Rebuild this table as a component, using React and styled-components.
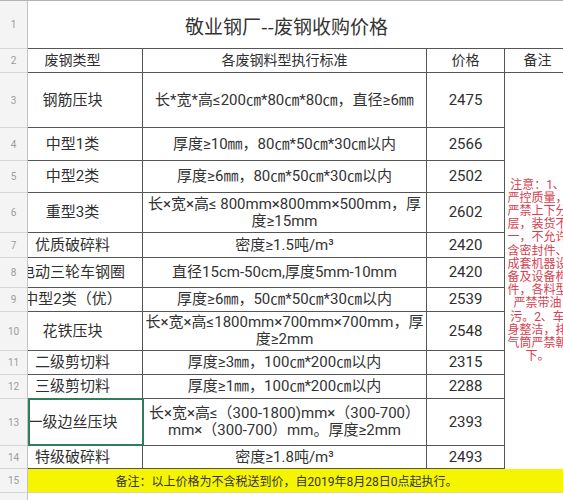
import React from "react";
import styled, { createGlobalStyle } from "styled-components";

const GlobalStyle = createGlobalStyle`
  html, body {
    margin: 0;
    padding: 0;
    background: #ffffff;
    overflow: hidden;
  }
  body {
    width: 563px;
    height: 500px;
    font-family: "Roboto", "Noto Sans CJK SC", sans-serif;
  }
`;

const ROW_HEIGHTS = [48, 24, 55, 33, 32, 40, 25, 30, 24, 39, 24, 24, 47, 23, 24, 40];

const rows = [
  { type: "钢筋压块", spec: ["长*宽*高≤200㎝*80㎝*80㎝，直径≥6㎜"], price: "2475" },
  { type: "中型1类", spec: ["厚度≥10㎜，80㎝*50㎝*30㎝以内"], price: "2566" },
  { type: "中型2类", spec: ["厚度≥6㎜，80㎝*50㎝*30㎝以内"], price: "2502" },
  { type: "重型3类", spec: ["长×宽×高≤ 800mm×800mm×500mm，厚", "度≥15mm"], price: "2602" },
  { type: "优质破碎料", spec: ["密度≥1.5吨/m³"], price: "2420" },
  { type: "电动三轮车钢圈", spec: ["直径15cm-50cm,厚度5mm-10mm"], price: "2420" },
  { type: "中型2类（优）", spec: ["厚度≥6㎜，50㎝*50㎝*30㎝以内"], price: "2539" },
  { type: "花铁压块", spec: ["长×宽×高≤1800mm×700mm×700mm，厚", "度≥2mm"], price: "2548" },
  { type: "二级剪切料", spec: ["厚度≥3㎜，100㎝*200㎝以内"], price: "2315" },
  { type: "三级剪切料", spec: ["厚度≥1㎜，100㎝*200㎝以内"], price: "2288" },
  { type: "一级边丝压块", spec: ["长×宽×高≤（300-1800)mm×（300-700）", "mm×（300-700）mm。厚度≥2mm"], price: "2393", selected: true },
  { type: "特级破碎料", spec: ["密度≥1.8吨/m³"], price: "2493" },
];

const notes = [
  "注意：1、",
  "严控质量，",
  "严禁上下分",
  "层，装货不",
  "一，不允许",
  "含密封件、",
  "成套机器设",
  "备及设备构",
  "件，各料型",
  "严禁带油",
  "污。2、车",
  "身整洁，排",
  "气筒严禁朝",
  "下。",
];

const Page = styled.div`
  display: flex;
  width: 563px;
  height: 500px;
  overflow: hidden;
  border-top: 1px solid #b4b4b4;
  box-sizing: border-box;
`;

const RowHeaders = styled.div`
  width: 28px;
  flex: none;
  display: flex;
  flex-direction: column;
  background: #f4f4f4;
  border-right: 1px solid #c4c4c4;
  box-sizing: border-box;
`;

const RowNum = styled.div`
  flex: none;
  box-sizing: border-box;
  border-bottom: 1px solid #d6d6d6;
  display: flex;
  align-items: center;
  justify-content: center;
  font-size: 10px;
  color: #9c9c9c;
`;

const Viewport = styled.div`
  flex: 1;
  overflow: hidden;
`;

const Sheet = styled.div`
  margin-left: -25px;
  display: grid;
  grid-template-columns: 140px 284px 78px 65px;
  grid-template-rows: ${ROW_HEIGHTS.map((h) => h + "px").join(" ")};
  color: #2f2f2f;
`;

const Cell = styled.div`
  position: relative;
  box-sizing: border-box;
  display: flex;
  align-items: center;
  justify-content: center;
  text-align: center;
  white-space: nowrap;
  border-right: 1px solid #555;
  border-bottom: 1px solid #555;
  font-size: ${(p) => p.$size || 15}px;
  line-height: 17px;
`;

const TitleCell = styled.div`
  grid-column: 1 / -1;
  display: flex;
  align-items: center;
  justify-content: center;
  box-sizing: border-box;
  border-bottom: 1px solid #555;
  font-family: "Noto Sans CJK SC", sans-serif;
  font-size: 19px;
  color: #333;
  padding-top: 2px;
`;

const SpecText = styled.div`
  display: flex;
  flex-direction: column;
  align-items: center;
  font-size: 15px;
  line-height: 17px;
  color: #333;
`;

const NotesCell = styled.div`
  grid-column: 4;
  grid-row: 3 / 15;
  display: flex;
  flex-direction: column;
  align-items: center;
  justify-content: center;
  white-space: nowrap;
  font-size: 12px;
  line-height: 13.2px;
  color: #d7404f;
`;

const FooterCell = styled.div`
  grid-column: 1 / -1;
  box-sizing: border-box;
  background: #f6f500;
  border-bottom: 1px solid #d8d8a0;
  display: flex;
  align-items: center;
  justify-content: center;
  font-size: 12px;
  color: #333;
`;

const EmptyRow = styled.div`
  grid-column: 1 / -1;
`;

const Selection = styled.div`
  position: absolute;
  left: 25px;
  right: -2px;
  top: -1px;
  bottom: -1px;
  border: 2px solid #2f7d5c;
  pointer-events: none;
`;

export default function App() {
  return (
    <>
      <GlobalStyle />
      <Page>
        <RowHeaders>
          {ROW_HEIGHTS.map((h, i) => (
            <RowNum key={i} style={{ height: h }}>
              {i < 15 ? i + 1 : ""}
            </RowNum>
          ))}
        </RowHeaders>
        <Viewport>
          <Sheet>
            <TitleCell>敬业钢厂--废钢收购价格</TitleCell>

            <Cell $size={14}>废钢类型</Cell>
            <Cell $size={14}>各废钢料型执行标准</Cell>
            <Cell $size={14}>价格</Cell>
            <Cell $size={14} style={{ borderRight: "none" }}>备注</Cell>

            {rows.map((r, i) => (
              <React.Fragment key={i}>
                <Cell style={{ gridColumn: 1 }}>
                  {r.type}
                  {r.selected ? <Selection /> : null}
                </Cell>
                <Cell style={{ gridColumn: 2 }}>
                  <SpecText>
                    {r.spec.map((line, j) => (
                      <span key={j}>{line}</span>
                    ))}
                  </SpecText>
                </Cell>
                <Cell style={{ gridColumn: 3 }}>{r.price}</Cell>
              </React.Fragment>
            ))}

            <NotesCell>
              {notes.map((n, i) => (
                <span key={i}>{n}</span>
              ))}
            </NotesCell>

            <FooterCell>备注：以上价格为不含税送到价，自2019年8月28日0点起执行。</FooterCell>
            <EmptyRow />
          </Sheet>
        </Viewport>
      </Page>
    </>
  );
}
